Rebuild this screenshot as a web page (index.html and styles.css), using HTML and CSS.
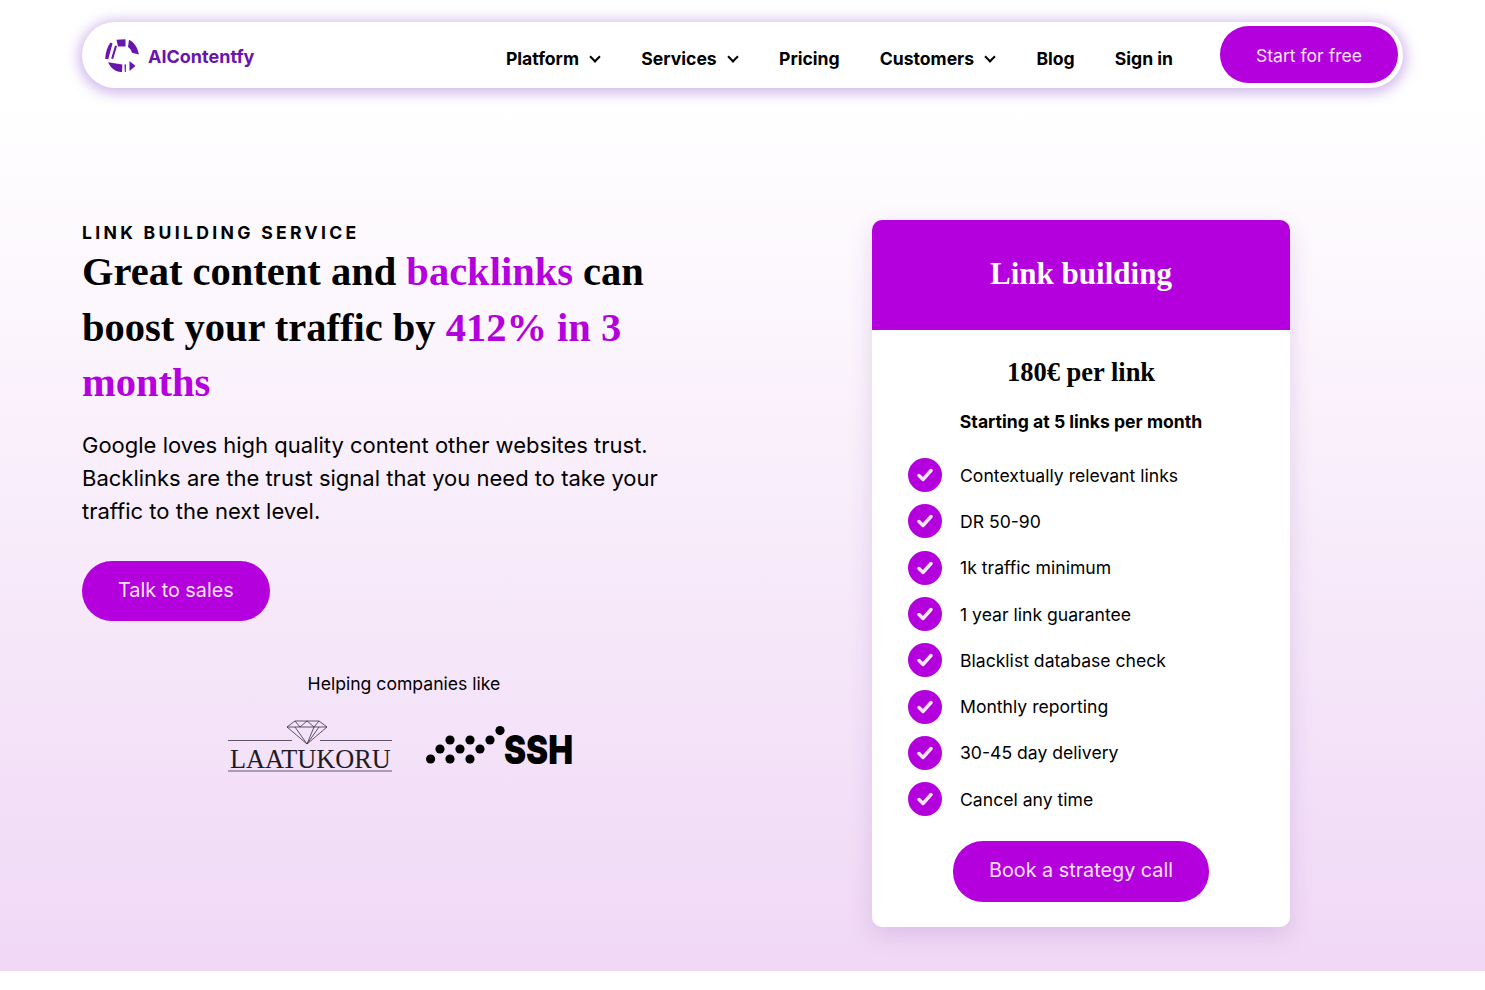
FILE: index.html
```html
<!DOCTYPE html>
<html>
  <head>
    <title>Link building service - AIContentfy</title>
    <meta name="viewport" content="width=device-width, initial-scale=1" />
    <link rel="stylesheet" href="styles.css">
  </head>
  <body>
    <!-- top navigation -->
    <header class="topbar">
      <nav class="nav">
        <a class="brand" href="#">
          <svg class="brand-mark" viewBox="0 0 34 34" width="34" height="34">
            <path d="M11.5 0.8 L20.5 0.3 L20.5 7.5 L13 7.5 Z" />
            <path d="M24 0.8 C29 3 33 9 33.8 15.5 L27 13.8 C26.5 11.5 25 9.5 23 8 Z" />
            <path d="M5.5 3.5 L7.5 4.5 L3.3 20 L0.2 20 C0.5 13 2.5 7.5 5.5 3.5 Z" />
            <path d="M10 6.5 L12 7 L8.2 20 L6.2 19.5 Z" />
            <path d="M3 23.3 L17.3 25.5 L17 33 C11 33.5 6 29.5 3 23.3 Z" />
            <path d="M19.5 25.5 L21 25.5 L20.8 33 L19.8 33 Z" />
            <path d="M24.5 22 L30.5 27 L24.5 32 Z" />
          </svg>
          <span>AIContentfy</span>
        </a>
        <ul class="nav-links">
          <li><a href="#">Platform <span class="chev"></span></a></li>
          <li><a href="#">Services <span class="chev"></span></a></li>
          <li><a href="#">Pricing</a></li>
          <li><a href="#">Customers <span class="chev"></span></a></li>
          <li><a href="#">Blog</a></li>
          <li><a href="#">Sign in</a></li>
        </ul>
        <a class="btn btn-nav" href="#">Start for free</a>
      </nav>
    </header>

    <main class="hero">
      <!-- left column -->
      <section class="intro">
        <p class="eyebrow">LINK BUILDING SERVICE</p>
        <h1 class="headline">Great content and <em>backlinks</em> can<br>boost your traffic by <em>412% in 3</em><br><em>months</em></h1>
        <p class="lead">Google loves high quality content other websites trust. Backlinks are the trust signal that you need to take your traffic to the next level.</p>
        <a class="btn btn-big" href="#">Talk to sales</a>
        <div class="clients">
          <p class="clients-title">Helping companies like</p>
          <div class="client-logos">
            <svg class="logo-laatukoru" viewBox="0 0 166 60" width="166" height="60">
              <g fill="none" stroke="#3a3040" stroke-width="0.8">
                <path d="M60 7 L68 1 H92 L100 7 L80 24 Z" />
                <path d="M60 7 H100 M68 7 L80 24 L92 7 M73 7 L80 1 L87 7 L80 24 M68 1 L73 7 M92 1 L87 7" />
              </g>
              <path d="M1 20.5 H65 M93 20.5 H165 M1 51 H165" stroke="#3a3040" stroke-width="0.8" />
              <text x="3" y="48" class="laatukoru-text">LAATUKORU</text>
            </svg>
            <svg class="logo-ssh" viewBox="0 0 150 52" width="150" height="52">
              <circle cx="74" cy="4.6" r="4.6" />
              <circle cx="64" cy="14" r="4.6" /><circle cx="44" cy="14" r="4.6" /><circle cx="24" cy="14" r="4.6" />
              <circle cx="54" cy="23" r="4.6" /><circle cx="34" cy="23" r="4.6" /><circle cx="14" cy="23" r="4.6" />
              <circle cx="44" cy="33" r="4.6" /><circle cx="24" cy="33" r="4.6" /><circle cx="4.6" cy="33" r="4.6" />
              <text transform="translate(78 38) scale(0.83 1)" class="ssh-text">SSH</text>
            </svg>
          </div>
        </div>
      </section>

      <!-- pricing card -->
      <aside class="card">
        <h2 class="card-title">Link building</h2>
        <div class="card-body">
          <p class="price">180€ per link</p>
          <p class="price-note">Starting at 5 links per month</p>
          <ul class="features">
            <li><span class="check"><svg viewBox="0 0 16 16" width="16" height="16"><path d="M2 8.5 L6 12.5 L14 3.5" /></svg></span>Contextually relevant links</li>
            <li><span class="check"><svg viewBox="0 0 16 16" width="16" height="16"><path d="M2 8.5 L6 12.5 L14 3.5" /></svg></span>DR 50-90</li>
            <li><span class="check"><svg viewBox="0 0 16 16" width="16" height="16"><path d="M2 8.5 L6 12.5 L14 3.5" /></svg></span>1k traffic minimum</li>
            <li><span class="check"><svg viewBox="0 0 16 16" width="16" height="16"><path d="M2 8.5 L6 12.5 L14 3.5" /></svg></span>1 year link guarantee</li>
            <li><span class="check"><svg viewBox="0 0 16 16" width="16" height="16"><path d="M2 8.5 L6 12.5 L14 3.5" /></svg></span>Blacklist database check</li>
            <li><span class="check"><svg viewBox="0 0 16 16" width="16" height="16"><path d="M2 8.5 L6 12.5 L14 3.5" /></svg></span>Monthly reporting</li>
            <li><span class="check"><svg viewBox="0 0 16 16" width="16" height="16"><path d="M2 8.5 L6 12.5 L14 3.5" /></svg></span>30-45 day delivery</li>
            <li><span class="check"><svg viewBox="0 0 16 16" width="16" height="16"><path d="M2 8.5 L6 12.5 L14 3.5" /></svg></span>Cancel any time</li>
          </ul>
          <a class="btn btn-big" href="#">Book a strategy call</a>
        </div>
      </aside>
    </main>
  </body>
</html>
```

FILE: styles.css
```css
* {
  margin: 0;
  padding: 0;
  box-sizing: border-box;
}

body {
  font-family: Inter, "Liberation Sans", sans-serif;
  color: #000;
  background-color: #fff;
}

a {
  color: inherit;
  text-decoration: none;
}

ul {
  list-style: none;
}

/* top navigation */
.topbar {
  height: 104px;
  padding: 22px 82px 0;
}

.nav {
  display: flex;
  align-items: center;
  height: 66px;
  padding: 0 5px 0 23px;
  background-color: #fff;
  border-radius: 33px;
  box-shadow: 0 2px 14px 3px rgba(125, 60, 200, 0.38);
}

.brand {
  display: flex;
  align-items: center;
  gap: 9px;
  margin-top: 2px;
  font-size: 18px;
  font-weight: 700;
  color: #6a14ae;
}

.brand-mark {
  fill: #6a14ae;
}

.nav-links {
  display: flex;
  gap: 40px;
  margin-left: auto;
  margin-top: 6px;
  margin-right: 47px;
  font-size: 17.6px;
  font-weight: 700;
}

.nav-links a {
  display: flex;
  align-items: center;
}

.chev {
  width: 8px;
  height: 8px;
  margin: -3px 2.3px 0 12px;
  border-right: 2.5px solid #000;
  border-bottom: 2.5px solid #000;
  transform: rotate(45deg);
}

.btn {
  display: inline-block;
  color: #fbe3fb;
  background-color: #b300dc;
  border-radius: 30px;
}

.btn-nav {
  width: 178px;
  height: 57px;
  margin-top: -2px;
  font-size: 17.6px;
  line-height: 59px;
  text-align: center;
}

.btn-big {
  padding: 0 36px;
  height: 60.5px;
  font-size: 19.8px;
  line-height: 59.5px;
}

/* hero */
.hero {
  display: flex;
  align-items: flex-start;
  height: 867px;
  padding: 116px 82px 0;
  background: linear-gradient(180deg, #fff 0%, #f0d8f6 100%);
}

.intro {
  width: 644px;
}

.eyebrow {
  font-size: 17.6px;
  font-weight: 700;
  line-height: 25px;
  letter-spacing: 3.3px;
}

.headline {
  font-family: "Liberation Serif", serif;
  font-size: 40.5px;
  font-weight: 700;
  line-height: 55.5px;
  margin-top: -1px;
}

.headline em {
  font-style: normal;
  color: #b300dc;
}

.lead {
  margin-top: 18px;
  margin-bottom: 33px;
  width: 590px;
  font-size: 22px;
  line-height: 33px;
}

.clients {
  margin-top: 50px;
  text-align: center;
}

.clients-title {
  font-size: 17.6px;
  line-height: 26px;
}

.client-logos {
  display: flex;
  justify-content: center;
  align-items: flex-start;
  gap: 33px;
  margin-top: 23px;
  padding-right: 6px;
}

.logo-ssh {
  margin-top: 6px;
}

.laatukoru-text {
  font-family: "Liberation Serif", serif;
  font-size: 26.3px;
  fill: #201a24;
}

.ssh-text {
  font-family: Inter, sans-serif;
  font-size: 40px;
  font-weight: 900;
}

/* pricing card */
.card {
  width: 418px;
  height: 707px;
  margin-left: 146px;
  background-color: #fff;
  border-radius: 10px;
  box-shadow: 0 8px 24px rgba(110, 50, 150, 0.16);
  overflow: hidden;
  text-align: center;
}

.card-title {
  height: 110px;
  font-family: "Liberation Serif", serif;
  font-size: 31px;
  font-weight: 700;
  line-height: 107px;
  color: #fff;
  background-color: #b300dc;
}

.card-body {
  padding-top: 25px;
}

.price {
  font-family: "Liberation Serif", serif;
  font-size: 26.5px;
  font-weight: 700;
  line-height: 34px;
}

.price-note {
  margin-top: 20px;
  font-size: 17.6px;
  font-weight: 700;
  line-height: 26px;
}

.features {
  margin: 17px 0 19px 36px;
  text-align: left;
}

.features li {
  display: flex;
  align-items: center;
  gap: 18px;
  height: 46.3px;
  font-size: 17.6px;
}

.check {
  display: flex;
  align-items: center;
  justify-content: center;
  width: 34px;
  height: 34px;
  border-radius: 50%;
  background-color: #b300dc;
}

.check svg {
  fill: none;
  stroke: #fbe9fb;
  stroke-width: 3.4;
  stroke-linecap: round;
  stroke-linejoin: round;
}
```
